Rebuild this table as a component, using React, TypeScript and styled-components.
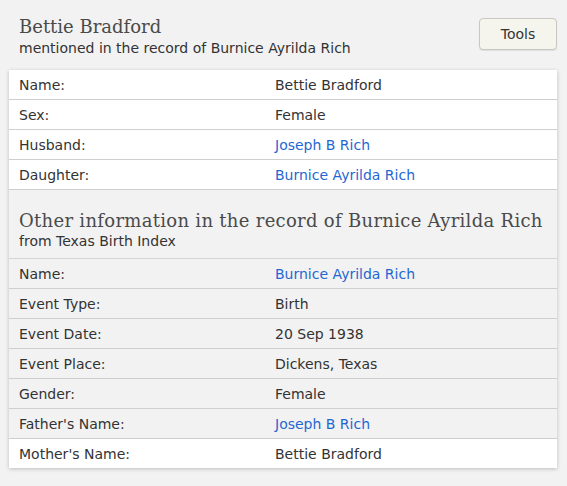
import React from "react";
import styled, { createGlobalStyle } from "styled-components";

const Global = createGlobalStyle`
  html, body { margin: 0; padding: 0; background: #f2f2f2; }
  body { font-family: "DejaVu Sans", Verdana, sans-serif; color: #333; }
`;

const Page = styled.div`
  padding: 10px 10px 20px 9px;
`;

const Header = styled.div`
  display: flex;
  justify-content: space-between;
  align-items: flex-start;
  padding: 6px 0 0 10px;
  margin-bottom: 12px;
`;

const TitleBlock = styled.div`
  display: flex;
  flex-direction: column;
`;

const Title = styled.h1`
  margin: 0;
  font-family: "DejaVu Serif", Georgia, serif;
  font-weight: normal;
  font-size: 18px;
  line-height: 22px;
  color: #4a4a4a;
`;

const Subtitle = styled.div`
  font-size: 14px;
  line-height: 20px;
  color: #333;
`;

const ToolsButton = styled.button`
  margin-top: 2px;
  width: 78px;
  height: 32px;
  border: 1px solid #c8c8c0;
  border-radius: 4px;
  background: #f5f5ee;
  box-shadow: 0 1px 1px rgba(0, 0, 0, 0.08);
  font-family: "DejaVu Sans", Verdana, sans-serif;
  font-size: 14px;
  color: #333;
`;

const Card = styled.div`
  background: #fff;
  box-shadow: 0 1px 4px rgba(0, 0, 0, 0.22);
`;

const Row = styled.div<{ $shade?: boolean }>`
  display: grid;
  grid-template-columns: 256px 1fr;
  height: 29px;
  align-items: center;
  padding-left: 10px;
  font-size: 14px;
  background: ${(p) => (p.$shade ? "#f2f2f2" : "#fff")};
  border-bottom: 1px solid #cfcfcf;
  &:last-child { border-bottom: none; }
`;

const Value = styled.span<{ $link?: boolean }>`
  color: ${(p) => (p.$link ? "#1f67d2" : "#333")};
`;

const SectionHeader = styled.div`
  background: #f2f2f2;
  padding: 20px 10px 8px 10px;
  border-bottom: 1px solid #d4d4d4;
  box-shadow: 0 1px 0 #e8e8e8;
`;

const SectionTitle = styled.h2`
  margin: 0;
  font-family: "DejaVu Serif", Georgia, serif;
  font-weight: normal;
  font-size: 18px;
  letter-spacing: 0.3px;
  line-height: 22px;
  color: #4a4a4a;
`;

const SectionSub = styled.div`
  font-size: 14px;
  line-height: 18px;
  color: #333;
`;

type Item = { label: string; value: string; link?: boolean };

const top: Item[] = [
  { label: "Name:", value: "Bettie Bradford" },
  { label: "Sex:", value: "Female" },
  { label: "Husband:", value: "Joseph B Rich", link: true },
  { label: "Daughter:", value: "Burnice Ayrilda Rich", link: true },
];

const other: Item[] = [
  { label: "Name:", value: "Burnice Ayrilda Rich", link: true },
  { label: "Event Type:", value: "Birth" },
  { label: "Event Date:", value: "20 Sep 1938" },
  { label: "Event Place:", value: "Dickens, Texas" },
  { label: "Gender:", value: "Female" },
  { label: "Father's Name:", value: "Joseph B Rich", link: true },
  { label: "Mother's Name:", value: "Bettie Bradford" },
];

export default function App() {
  return (
    <Page>
      <Global />
      <Header>
        <TitleBlock>
          <Title>Bettie Bradford</Title>
          <Subtitle>mentioned in the record of Burnice Ayrilda Rich</Subtitle>
        </TitleBlock>
        <ToolsButton>Tools</ToolsButton>
      </Header>
      <Card>
        {top.map((it) => (
          <Row key={it.label}>
            <span>{it.label}</span>
            <Value $link={it.link}>{it.value}</Value>
          </Row>
        ))}
        <SectionHeader>
          <SectionTitle>Other information in the record of Burnice Ayrilda Rich</SectionTitle>
          <SectionSub>from Texas Birth Index</SectionSub>
        </SectionHeader>
        {other.map((it, i) => (
          <Row key={it.label} $shade={i < other.length - 1}>
            <span>{it.label}</span>
            <Value $link={it.link}>{it.value}</Value>
          </Row>
        ))}
      </Card>
    </Page>
  );
}
